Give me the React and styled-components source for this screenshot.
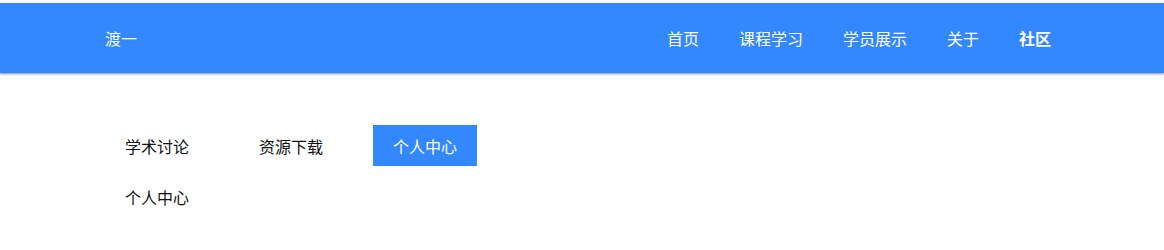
import React, { useState } from 'react';
import styled, { createGlobalStyle } from 'styled-components';

const GlobalStyle = createGlobalStyle`
body {
  margin: 0;
  padding-top: 3px;
  background: #fff;
  font-family: "Microsoft YaHei", "Noto Sans CJK SC", sans-serif;
}
`;

const Header = styled.header`
height: 70px;
background-color: #3388ff;
box-shadow: 0 1px 2px rgba(30, 60, 120, 0.6);
`;

const HeaderInner = styled.div`
height: 100%;
display: flex;
align-items: center;
justify-content: space-between;
padding: 0 113px 0 105px;
color: #fff;
font-size: 16px;
`;

const Logo = styled.div`
font-size: 16px;
`;

const Nav = styled.nav`
display: flex;
gap: 40px;
`;

const NavItem = styled.a`
color: #fff;
font-size: 16px;
font-weight: ${p => (p.active ? 'bold' : 'normal')};
cursor: pointer;
`;

const Main = styled.div`
padding: 52px 0 0 105px;
`;

const Tabs = styled.div`
display: flex;
gap: 30px;
`;

const Tab = styled.div`
width: 104px;
height: 41px;
display: flex;
align-items: center;
justify-content: center;
font-size: 16px;
color: ${p => (p.active ? '#fff' : '#111')};
background-color: ${p => (p.active ? '#3388ff' : 'transparent')};
cursor: pointer;
`;

const Panel = styled.div`
padding: 20px 20px;
font-size: 16px;
color: #111;
line-height: 22px;
`;

const navItems = ['首页', '课程学习', '学员展示', '关于', '社区'];
const tabs = ['学术讨论', '资源下载', '个人中心'];

export default function App() {
    const [current, setCurrent] = useState(2);

    return (
        <>
            <GlobalStyle />
            <Header>
                <HeaderInner>
                    <Logo>渡一</Logo>
                    <Nav>
                        {navItems.map((item, i) => (
                            <NavItem key={item} active={i === navItems.length - 1}>{item}</NavItem>
                        ))}
                    </Nav>
                </HeaderInner>
            </Header>
            <Main>
                <Tabs>
                    {tabs.map((t, i) => (
                        <Tab key={t} active={i === current} onClick={() => setCurrent(i)}>{t}</Tab>
                    ))}
                </Tabs>
                <Panel>{tabs[current]}</Panel>
            </Main>
        </>
    );
}
